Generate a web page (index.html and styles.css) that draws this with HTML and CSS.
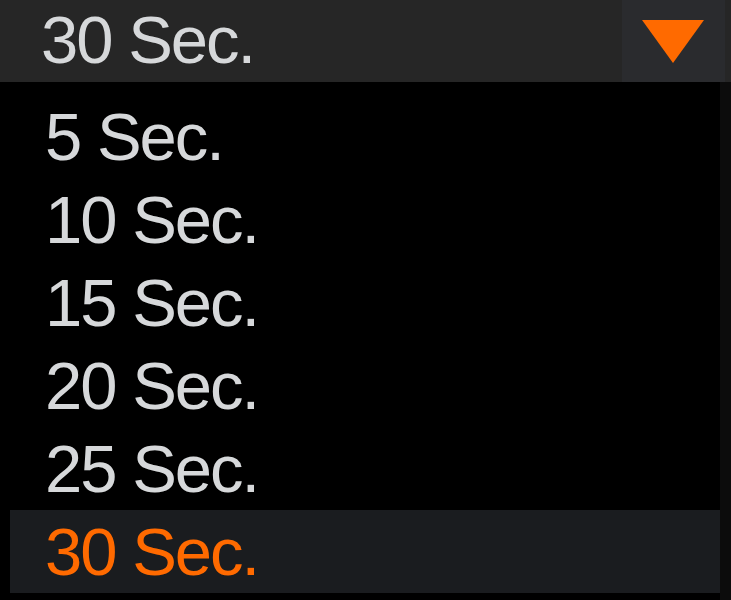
FILE: index.html
```html
<!DOCTYPE html>
<html lang="en">
<head>
    <meta charset="UTF-8">
    <title>Interval</title>
    <link rel="stylesheet" href="styles.css">
</head>
<body>
    <div class="dropdown">
        <div class="select">
            <div class="select-value">30 Sec.</div>
            <div class="select-arrow"><span class="triangle"></span></div>
        </div>
        <ul class="options">
            <li class="option">5 Sec.</li>
            <li class="option">10 Sec.</li>
            <li class="option">15 Sec.</li>
            <li class="option">20 Sec.</li>
            <li class="option">25 Sec.</li>
            <li class="option selected">30 Sec.</li>
        </ul>
    </div>
</body>
</html>
```

FILE: styles.css
```css
body {
    margin: 0;
    padding: 0;
    background-color: #000;
    font-family: 'Liberation Sans', Arial, sans-serif;
    color: #d6d8da;
}
.dropdown {
    width: 731px;
    height: 600px;
    overflow: hidden;
}
.select {
    display: flex;
    height: 82px;
    background-color: #262626;
}
.select-value {
    flex: 1;
    padding-left: 41px;
    font-size: 67px;
    line-height: 80px;
    letter-spacing: -2px;
}
.select-arrow {
    width: 103px;
    margin-right: 6px;
    background-color: #2a2b2e;
    display: flex;
    justify-content: center;
    align-items: center;
}
.triangle {
    width: 0;
    height: 0;
    border-left: 31px solid transparent;
    border-right: 31px solid transparent;
    border-top: 43px solid #ff6a00;
    margin-left: -2px;
    margin-top: 1px;
}
.options {
    list-style: none;
    margin: 0;
    padding: 13px 0 7px 10px;
    background-color: #000;
    border-right: 11px solid #0c0c0c;
}
.option {
    height: 83px;
    line-height: 83px;
    font-size: 67px;
    letter-spacing: -2px;
    padding-left: 35px;
}
.option.selected {
    background-color: #1a1c1f;
    color: #ff6a00;
}
```
